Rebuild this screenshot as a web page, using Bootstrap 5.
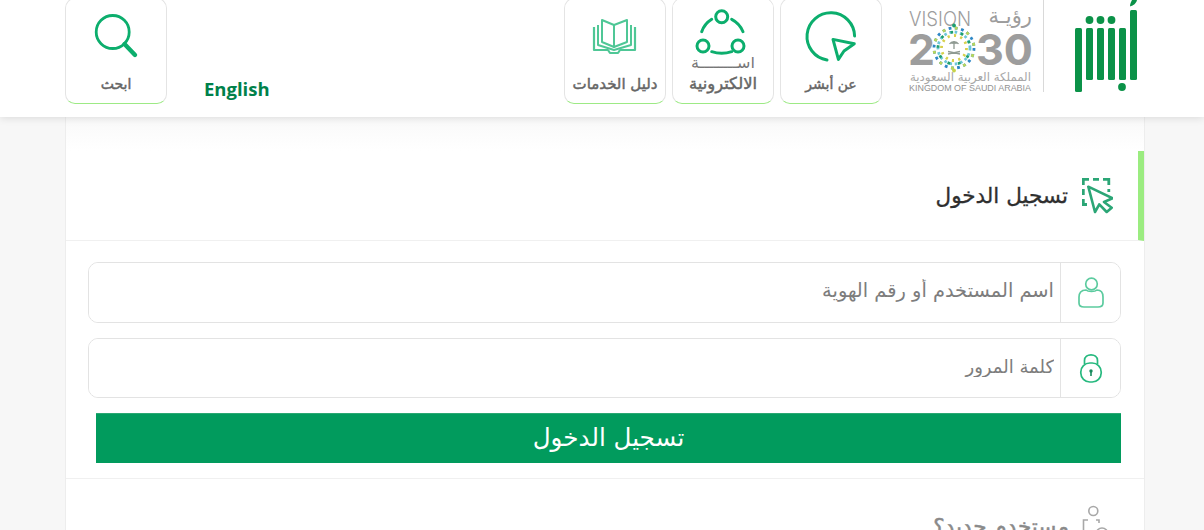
<!DOCTYPE html>
<html lang="ar" dir="rtl">
<head>
<meta charset="utf-8">
<title>أبشر</title>
<link rel="stylesheet" href="https://cdn.jsdelivr.net/npm/bootstrap@5.3.0/dist/css/bootstrap.min.css">
<style>
html,body{height:530px;overflow:hidden}
body{background:#f7f7f7;font-family:"DejaVu Sans","Liberation Sans",sans-serif;color:#333}
.site-top{height:117px;background:#fff;box-shadow:0 1px 8px rgba(0,0,0,.12);padding:0 67px 0 65px;position:relative;z-index:2}
.brand-logo{width:62px;height:92px;display:block;flex:none}
.brand-rule{width:1px;height:92px;background:#d9d9d9;margin:0 31px 0 10px;flex:none}
.vision{width:125px;height:92px;display:block;flex:none;margin-left:26px;direction:ltr}
.tile-row{gap:6px}
.tile{width:102px;height:106px;margin-top:-2px;background:#fff;border:1px solid #e4e4e4;border-bottom-color:#9dea85;border-radius:10px;color:#666;font-size:14px;font-weight:400;-webkit-text-stroke:.45px #666;text-decoration:none;display:block;overflow:hidden;flex:none}
.tile-art{display:block;width:100px;height:75px;position:relative;z-index:1}
.tile-art-short{height:58px;background:#fff}
.tile-text{display:block;text-align:center;white-space:nowrap;line-height:20px;height:20px}
.tile-mid{font-size:16.4px}
.tile-wide{font-size:15px}
.tile-under{margin-top:-4px;height:21px;color:#777;-webkit-text-stroke:0;font-size:16px}
.lang-link{color:#00814a;font:700 18.5px "Open Sans",sans-serif;text-decoration:none;margin:77px 0 0 0;line-height:24px;direction:ltr}
.end-group{margin-right:auto;gap:37px}
.panel-box{width:1080px;margin-left:65px;margin-right:59px;background:#fff;border-left:1px solid #ededed;border-right:1px solid #ededed;height:413px;overflow:hidden}
.fade-strip{height:34px;background:linear-gradient(#f9f9f9,#fff)}
.sec-head{height:90px;border-bottom:1px solid #f0f0f0;border-right:6px solid #9bec80;padding-right:25px;gap:14px}
.sec-title{font-size:21.5px;font-weight:400;color:#2f2f2f;-webkit-text-stroke:.3px #2f2f2f;margin:0}
.login-form{padding:21px 23px 0 22px}
.field{height:61px;border:1px solid #e3e3e3;border-radius:10px;background:#fff;margin-bottom:15px;overflow:hidden;flex-wrap:nowrap}
.field-short{height:60px}
.field-ic{width:60px;flex:none;border:0;border-left:1px solid #e3e3e3;background:#fff;padding:0;justify-content:center;border-radius:0!important;margin:0!important}
.field-in{border:0;border-radius:0!important;margin:0!important;padding:0 6px 3px;font-size:19.4px;color:#555;box-shadow:none;font-family:"DejaVu Sans",sans-serif}
.field-short .field-in{font-size:18px;padding-bottom:4px}
.field-in::placeholder{color:#7d7d7d;opacity:1}
.go-btn{display:block;width:1025px;height:50px;background:#019b5d;border:0;border-top:1px solid #2aa873;border-radius:0;color:#fff;font-size:24.6px;line-height:43px;padding:0 0 3px}
.sec-new{border-top:1px solid #f0f0f0;margin-top:15px;padding:26px 33px 0 0;gap:12px}
.sec-new-title{font-size:21.5px;color:#8a8a8a;-webkit-text-stroke:.5px #8a8a8a;margin:9px 0 0;font-weight:400}
</style>
</head>
<body>
<header class="site-top d-flex align-items-start">
  <svg class="brand-logo" viewBox="0 0 62 92" role="img" aria-label="أبشر">
    <g fill="#0b9248">
      <rect x="55" y="10" width="7" height="70" rx="1.5"/>
      <rect x="44" y="28" width="7" height="52" rx="1.5"/>
      <rect x="33" y="28" width="7" height="52" rx="1.5"/>
      <rect x="22" y="28" width="7" height="52" rx="1.5"/>
      <rect x="11" y="28" width="7" height="52" rx="1.5"/>
      <rect x="0" y="28" width="7" height="64" rx="1.5"/>
      <circle cx="14.5" cy="20" r="3.9"/><circle cx="25.5" cy="20" r="3.9"/><circle cx="36.5" cy="20" r="3.9"/>
      <circle cx="47" cy="87" r="3.9"/>
      <path d="M55 6.500 C58 5.500 61 4 62 0 H57 C56 2 55 3.500 55 6.500Z"/>
    </g>
  </svg>
  <span class="brand-rule"></span>
  <svg class="vision" viewBox="0 0 125 92" role="img" aria-label="Vision 2030">
    <g fill="#9d9d9d" font-family="Inter,Liberation Sans,sans-serif">
      <text x="1" y="26" font-size="20.500" font-weight="300" textLength="62" lengthAdjust="spacingAndGlyphs">VISION</text>
      <text x="124" y="23" font-size="21" font-family="DejaVu Sans,sans-serif" text-anchor="end">رؤيـة</text>
      <text x="0" y="65" font-size="43" font-weight="700" textLength="27" lengthAdjust="spacingAndGlyphs">2</text>
      <text x="68" y="65" font-size="43" font-weight="700" textLength="57" lengthAdjust="spacingAndGlyphs">30</text>
      <text x="123" y="81" font-size="11.800" fill="#a8a8a8" font-family="DejaVu Sans,sans-serif" text-anchor="end">المملكة العربية السعودية</text>
      <text x="1" y="91" font-size="8.800" fill="#929292" font-family="Liberation Sans,sans-serif" textLength="122" lengthAdjust="spacingAndGlyphs">KINGDOM OF SAUDI ARABIA</text>
    </g>
    <circle cx="46" cy="48" r="21.500" fill="#fff"/>
    <g fill="none" stroke-width="2.800">
      <circle cx="46" cy="48" r="20" stroke="#2e88c6" stroke-dasharray="2.800 3.500"/>
      <circle cx="46" cy="48" r="20" stroke="#b9d65a" stroke-dasharray="2.800 9.800" stroke-dashoffset="6.300"/>
      <circle cx="46" cy="48" r="16" stroke="#6cc7d8" stroke-dasharray="2.600 2.800"/>
      <circle cx="46" cy="48" r="16" stroke="#1f9f6d" stroke-dasharray="2.600 8" stroke-dashoffset="2.800"/>
      <circle cx="46" cy="48" r="12.500" stroke="#d7d04a" stroke-dasharray="2.200 4.300"/>
    </g>
    <g fill="none" stroke="#8f9a92" stroke-width="1.300">
      <path d="M46 41v8M41.500 44c2-3 7-3 9 0M43 42.500c1 1 5 1 6 0M40 54l12-2.500M52 54l-12-2.500"/>
    </g>
    <circle cx="46" cy="25.500" r="1.900" fill="#1f9f6d"/><circle cx="46" cy="70.500" r="1.900" fill="#c8d24a"/>
  </svg>
  <nav class="d-flex align-items-start tile-row">
    <a class="tile" href="#">
      <svg class="tile-art" viewBox="0 0 100 75" fill="none" stroke="#0cae6d" stroke-width="3" stroke-linecap="round" stroke-linejoin="round">
        <path d="M73.600 37 A23.800 23.800 0 1 0 46 61"/>
        <path d="M52 40.400 L73.300 44.800 L63 52 L57.400 60.400Z"/>
      </svg>
      <span class="tile-text">عن أبشر</span>
    </a>
    <a class="tile" href="#">
      <svg class="tile-art tile-art-short" viewBox="0 0 100 58" fill="none" stroke="#0cae6d" stroke-width="3" stroke-linecap="round">
        <circle cx="48.700" cy="17.700" r="6"/><circle cx="30" cy="47" r="6"/><circle cx="65" cy="47" r="6"/>
        <path d="M28.700 32.700 A24 24 0 0 1 38.700 20.300"/>
        <path d="M58.700 20.300 A24 24 0 0 1 70 32.700"/>
        <path d="M38.700 52.700 Q48.700 56 58.700 52.700"/>
      </svg>
      <span class="tile-text tile-under">اســــــــة</span>
      <span class="tile-text tile-mid">الالكترونية</span>
    </a>
    <a class="tile" href="#">
      <svg class="tile-art" viewBox="0 0 100 75" fill="none" stroke="#4fc796" stroke-width="2" stroke-linejoin="round">
        <g transform="translate(0 -1)">
        <path d="M37 22 L49 27 V49 L37 44Z"/>
        <path d="M62 22 L49 27 V49 L62 44Z"/>
        <path d="M33 27 V47 L49 52 L66 47 V27"/>
        <path d="M29 29 V52 H43 L45 55 H53 L55 52 H70 V29" stroke-width="2.200"/>
        </g>
      </svg>
      <span class="tile-text tile-wide">دليل الخدمات</span>
    </a>
  </nav>
  <div class="d-flex align-items-start end-group">
    <a class="lang-link" href="#">English</a>
    <a class="tile" href="#">
      <svg class="tile-art" viewBox="0 0 100 75" fill="none" stroke="#0cae6d">
        <circle cx="46.700" cy="33" r="16.500" stroke-width="2.800"/>
        <path d="M58.500 45 L69 56" stroke-width="4.400" stroke-linecap="round"/>
      </svg>
      <span class="tile-text">ابحث</span>
    </a>
  </div>
</header>
<main class="panel-box">
  <div class="fade-strip"></div>
  <div class="sec-head d-flex align-items-center">
    <svg width="31" height="36" viewBox="0 0 31 36" fill="none" class="flex-none">
      <path d="M7 1.300 H1.300 V7 M11 1.300 H17 M21 1.300 H26.800 V7 M1.300 11 V17 M26.800 11 V14 M1.300 21 V26.500 H5" stroke="#2ba676" stroke-width="2.800"/>
      <path d="M6.300 8.700 L30.700 20.300 L22 24 L29.700 29.700 L24.700 34 L17.300 26.300 L13 34Z" fill="#fff" stroke="#2ba676" stroke-width="2.600" stroke-linejoin="round"/>
    </svg>
    <h1 class="sec-title">تسجيل الدخول</h1>
  </div>
  <form class="login-form" onsubmit="return false">
    <div class="input-group field">
      <span class="input-group-text field-ic">
        <svg width="28" height="32" viewBox="0 0 28 32" fill="none" stroke="#5ccb9f" stroke-width="1.700">
          <circle cx="14.500" cy="7" r="5.800"/>
          <path d="M9 13 C4 13 2 16 2 20 V26 C2 29 4 30 7 30 H21 C24 30 26 29 26 26 V20 C26 16 24 13 20 13 C18 15 11 15 9 13Z"/>
        </svg>
      </span>
      <input class="form-control field-in" type="text" placeholder="اسم المستخدم أو رقم الهوية">
    </div>
    <div class="input-group field field-short">
      <span class="input-group-text field-ic">
        <svg width="24" height="30" viewBox="0 0 24 30" fill="none" stroke="#27b97f" stroke-width="1.700">
          <path d="M5.500 11 V7.500 C5.500 0 18.500 0 18.500 7.500 V11"/>
          <rect x="1.800" y="10" width="20.400" height="19" rx="9"/>
          <circle cx="12" cy="18" r="1.700" fill="#168a5c" stroke="none"/>
          <path d="M12 18 V23" stroke="#168a5c" stroke-width="1.600"/>
        </svg>
      </span>
      <input class="form-control field-in" type="password" placeholder="كلمة المرور">
    </div>
    <button class="btn go-btn" type="submit">تسجيل الدخول</button>
  </form>
  <div class="sec-new d-flex align-items-start">
    <svg width="30" height="30" viewBox="0 0 30 30" fill="none" stroke="#a8a8a8" stroke-width="1.600">
      <circle cx="12.300" cy="6" r="4.500"/>
      <path d="M7 15 H2.500 V26 M15 15 H18 V18"/>
      <circle cx="21" cy="29" r="6"/>
    </svg>
    <h2 class="sec-new-title">مستخدم جديد؟</h2>
  </div>
</main>
</body>
</html>
